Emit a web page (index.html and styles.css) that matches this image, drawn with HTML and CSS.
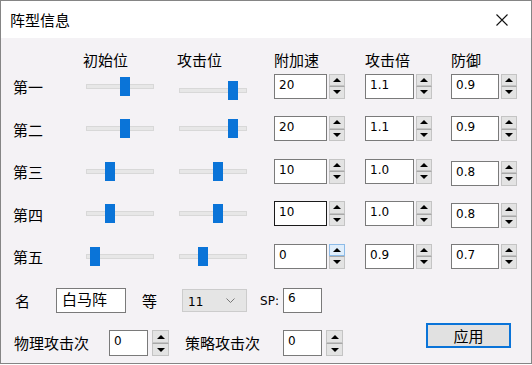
FILE: index.html
```html
<!DOCTYPE html>
<html lang="zh">
<head>
    <meta charset="UTF-8">
    <title>阵型信息</title>
    <link rel="stylesheet" href="styles.css">
</head>
<body>
    <div class="dialog">
        <div class="titlebar">
            <span class="title">阵型信息</span>
            <svg class="close" width="12" height="12" viewBox="0 0 12 12">
                <path d="M0.5 0.5 L11.5 11.5 M11.5 0.5 L0.5 11.5" stroke="#111" stroke-width="1.1" fill="none"/>
            </svg>
        </div>

        <div class="content">
            <div class="grid head">
                <span></span>
                <span class="h h-slide">初始位</span>
                <span class="h h-slide2">攻击位</span>
                <span class="h">附加速</span>
                <span class="h">攻击倍</span>
                <span class="h">防御</span>
            </div>

            <div class="grid rows">
                <!-- 第一 -->
                <span class="lbl">第一</span>
                <div class="slider"><span class="thumb" style="left:33px"></span></div>
                <div class="slider low"><span class="thumb" style="left:48px"></span></div>
                <div class="spin"><span class="field w1">20</span><span class="btns"><span class="up"></span><span class="dn"></span></span></div>
                <div class="spin"><span class="field w2">1.1</span><span class="btns"><span class="up"></span><span class="dn"></span></span></div>
                <div class="spin"><span class="field w3">0.9</span><span class="btns"><span class="up"></span><span class="dn"></span></span></div>

                <!-- 第二 -->
                <span class="lbl">第二</span>
                <div class="slider"><span class="thumb" style="left:33px"></span></div>
                <div class="slider"><span class="thumb" style="left:48px"></span></div>
                <div class="spin"><span class="field w1">20</span><span class="btns"><span class="up"></span><span class="dn"></span></span></div>
                <div class="spin"><span class="field w2">1.1</span><span class="btns"><span class="up"></span><span class="dn"></span></span></div>
                <div class="spin"><span class="field w3">0.9</span><span class="btns"><span class="up"></span><span class="dn"></span></span></div>

                <!-- 第三 -->
                <span class="lbl">第三</span>
                <div class="slider"><span class="thumb" style="left:18px"></span></div>
                <div class="slider"><span class="thumb" style="left:33px"></span></div>
                <div class="spin"><span class="field w1">10</span><span class="btns"><span class="up"></span><span class="dn"></span></span></div>
                <div class="spin"><span class="field w2">1.0</span><span class="btns"><span class="up"></span><span class="dn"></span></span></div>
                <div class="spin low2"><span class="field w3">0.8</span><span class="btns"><span class="up"></span><span class="dn"></span></span></div>

                <!-- 第四 -->
                <span class="lbl">第四</span>
                <div class="slider"><span class="thumb" style="left:18px"></span></div>
                <div class="slider"><span class="thumb" style="left:33px"></span></div>
                <div class="spin"><span class="field w1 focus">10</span><span class="btns"><span class="up"></span><span class="dn"></span></span></div>
                <div class="spin"><span class="field w2">1.0</span><span class="btns"><span class="up"></span><span class="dn"></span></span></div>
                <div class="spin low2"><span class="field w3">0.8</span><span class="btns"><span class="up"></span><span class="dn"></span></span></div>

                <!-- 第五 -->
                <span class="lbl">第五</span>
                <div class="slider"><span class="thumb" style="left:3px"></span></div>
                <div class="slider"><span class="thumb" style="left:18px"></span></div>
                <div class="spin"><span class="field w1">0</span><span class="btns"><span class="up hover"></span><span class="dn"></span></span></div>
                <div class="spin"><span class="field w2">0.9</span><span class="btns"><span class="up"></span><span class="dn"></span></span></div>
                <div class="spin"><span class="field w3">0.7</span><span class="btns"><span class="up"></span><span class="dn"></span></span></div>
            </div>

            <div class="line line-a">
                <span class="lbl">名</span>
                <span class="textbox name">白马阵</span>
                <span class="lbl deng">等</span>
                <div class="combo">
                    <span class="num">11</span>
                    <svg width="9" height="5" viewBox="0 0 9 5"><path d="M0.5 0.5 L4.5 4.5 L8.5 0.5" stroke="#777" fill="none"/></svg>
                </div>
                <span class="num sp">SP:</span>
                <span class="textbox spbox num">6</span>
            </div>

            <div class="line line-b">
                <span class="lbl">物理攻击次</span>
                <div class="spin small first"><span class="field w4">0</span><span class="btns"><span class="up"></span><span class="dn"></span></span></div>
                <span class="lbl second">策略攻击次</span>
                <div class="spin small last"><span class="field w4">0</span><span class="btns"><span class="up"></span><span class="dn"></span></span></div>
                <button class="apply">应用</button>
            </div>
        </div>
    </div>
</body>
</html>
```

FILE: styles.css
```css
body {
    margin: 0;
    background-color: white;
    font-family: "Noto Sans CJK SC", "DejaVu Sans", sans-serif;
    color: #000;
}
.dialog {
    width: 532px;
    height: 364px;
    box-sizing: border-box;
    border: 1px solid #858585;
    background-color: #f4f2f5;
    display: flex;
    flex-direction: column;
}
.titlebar {
    height: 37px;
    background-color: white;
    display: flex;
    align-items: center;
    padding: 0 23px 0 9px;
}
.title {
    font-size: 15px;
    flex: 1;
}
.close {
    display: block;
}
.content {
    flex: 1;
}
.grid {
    display: grid;
    grid-template-columns: 73px 93px 95px 91px 86px 1fr;
    padding-left: 12px;
    align-items: center;
    justify-items: start;
}
.head {
    margin-top: 10px;
    height: 24px;
}
.h {
    font-size: 15px;
    line-height: 20px;
}
.h-slide {
    margin-left: -3px;
}
.h-slide2 {
    margin-left: -2px;
}
.rows {
    grid-auto-rows: 28px;
    row-gap: 14.5px;
}
.lbl {
    font-size: 15px;
    line-height: 20px;
    white-space: nowrap;
}
.rows .lbl {
    margin-top: 2px;
}
.slider {
    position: relative;
    width: 68px;
    height: 5px;
    box-sizing: border-box;
    background-color: #e7e7e7;
    border: 1px solid #d8d8d8;
}
.slider.low {
    margin-top: 8px;
}
.thumb {
    position: absolute;
    top: -8px;
    width: 10px;
    height: 19px;
    background-color: #0a74d8;
}
.spin {
    display: flex;
    align-items: stretch;
    height: 25px;
}
.spin.low2 {
    margin-top: 4px;
}
.field {
    box-sizing: border-box;
    background-color: white;
    border: 1px solid #7a7a7a;
    font-family: "DejaVu Sans", sans-serif;
    font-size: 12px;
    line-height: 21px;
    padding-left: 4px;
}
.field.focus {
    border-color: #1a1a1a;
}
.w1 { width: 53px; }
.w2 { width: 49px; }
.w3 { width: 48px; }
.w4 { width: 39px; }
.btns {
    display: flex;
    flex-direction: column;
    width: 16px;
    margin-left: 2px;
}
.btns span {
    flex: 1;
    display: flex;
    align-items: center;
    justify-content: center;
    background-color: #e3e3e3;
    border: 1px solid #c4c4c4;
}
.btns .dn {
    border-top-color: #a8a8a8;
}
.btns .up::after {
    content: "";
    border-left: 4px solid transparent;
    border-right: 4px solid transparent;
    border-bottom: 4px solid #000;
}
.btns .dn::after {
    content: "";
    border-left: 4px solid transparent;
    border-right: 4px solid transparent;
    border-top: 4px solid #000;
}
.btns .hover {
    background-color: #e0eefb;
    border-color: #8cbbe8;
}
.line {
    display: flex;
    align-items: center;
}
.line-a {
    margin-top: 18px;
    height: 25px;
    padding-left: 14px;
}
.textbox {
    box-sizing: border-box;
    height: 25px;
    background-color: white;
    border: 1px solid #7a7a7a;
}
.name {
    width: 70px;
    margin-left: 26px;
    font-size: 15px;
    line-height: 20px;
    padding-left: 5px;
}
.deng {
    margin-left: 16px;
}
.num {
    font-family: "DejaVu Sans", sans-serif;
    font-size: 12px;
}
.combo {
    box-sizing: border-box;
    width: 65px;
    height: 23px;
    margin-left: 25px;
    background-color: #e5e5e5;
    border: 1px solid #cccccc;
    display: flex;
    align-items: center;
    justify-content: space-between;
    padding: 2px 11px 0 5px;
}
.combo svg {
    margin-top: -2px;
}
.sp {
    margin-left: 13px;
}
.spbox {
    width: 39px;
    margin-left: 4px;
    padding-left: 4px;
    line-height: 19px;
}
.line-b {
    margin-top: 17px;
    height: 26px;
    padding-left: 13px;
}
.spin.small {
    height: 26px;
}
.spin.small .btns {
    width: 17px;
    margin-left: 4px;
}
.first {
    margin-left: 20px;
}
.second {
    margin-left: 16px;
}
.last {
    margin-left: 23px;
}
.apply {
    margin-left: auto;
    margin-right: 20px;
    align-self: flex-start;
    margin-top: -7px;
    width: 85px;
    height: 25px;
    box-sizing: border-box;
    background-color: #e1e1e1;
    border: 2px solid #0a74d8;
    font-family: "Noto Sans CJK SC", sans-serif;
    font-size: 15px;
    line-height: 19px;
    padding: 0;
    color: #000;
}
```
